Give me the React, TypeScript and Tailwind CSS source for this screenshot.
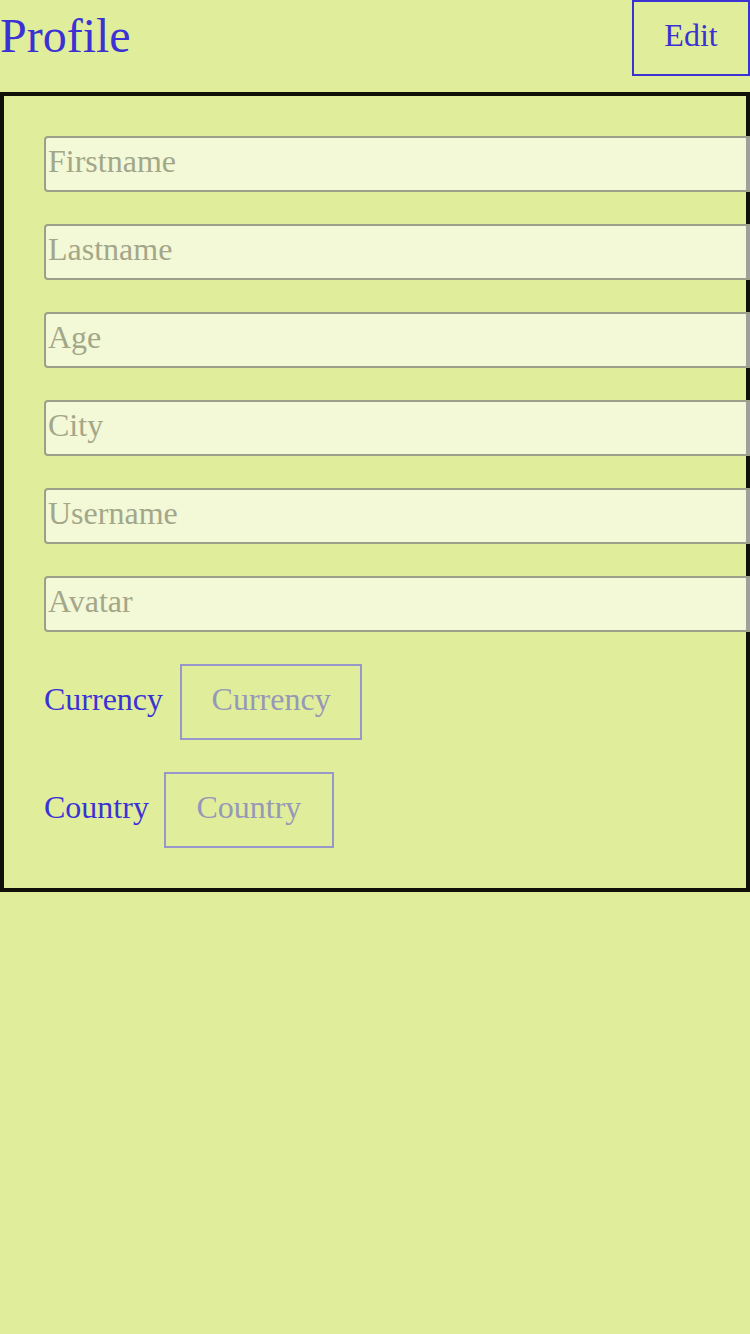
import React from "react";

const fields = ["Firstname", "Lastname", "Age", "City", "Username", "Avatar"];

export default function App() {
  return (
    <div
      className="w-[750px] min-h-[1334px] overflow-hidden bg-[#e0ee9c]"
      style={{ fontFamily: '"Liberation Serif", "Times New Roman", serif' }}
    >
      <div className="flex h-[76px] items-center justify-between">
        <h1 className="pb-[5px] text-[48px] leading-[55px] text-[#3c32d4]">Profile</h1>
        <button className="flex h-[76px] w-[118px] items-center justify-center border-2 border-[#3c32d4] pb-[5px] text-[32px] leading-[37px] text-[#3c32d4]">
          Edit
        </button>
      </div>
      <div className="mt-[16px] flex flex-col gap-8 border-4 border-[#101008] p-10">
        {fields.map((f) => (
          <input
            key={f}
            placeholder={f}
            className="h-[56px] w-[720px] shrink-0 rounded border-2 border-[#9c9f8a] bg-white/60 pb-[6px] pl-[2px] text-[32px] leading-[37px] text-[#333] outline-none placeholder:text-[#a3a78a]"
          />
        ))}
        <div className="flex items-center gap-[17px]">
          <span className="pb-[6px] text-[32px] leading-[37px] text-[#3c32d4]">Currency</span>
          <div className="flex h-[76px] items-center border-2 border-[#9797c9] px-[29.5px] pb-[6px] text-[32px] leading-[37px] text-[#9797b8]">
            Currency
          </div>
        </div>
        <div className="flex items-center gap-[15px]">
          <span className="pb-[6px] text-[32px] leading-[37px] text-[#3c32d4]">Country</span>
          <div className="flex h-[76px] items-center border-2 border-[#9797c9] px-[30.5px] pb-[6px] text-[32px] leading-[37px] text-[#9797b8]">
            Country
          </div>
        </div>
      </div>
    </div>
  );
}
